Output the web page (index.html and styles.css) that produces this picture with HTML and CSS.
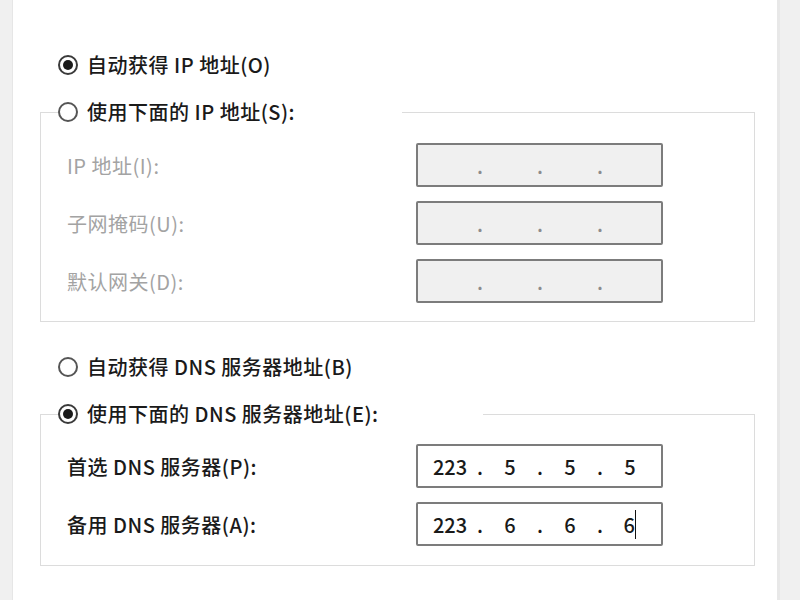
FILE: index.html
```html
<!DOCTYPE html>
<html lang="zh-CN">
<head>
<meta charset="utf-8">
<link rel="stylesheet" href="styles.css">
</head>
<body>
<div class="frame">
  <div class="side-left"></div>
  <div class="panel">
    <div class="option first">
      <span class="radio checked"><span class="dot"></span></span>
      <span class="opt-text">自动获得 IP 地址(O)</span>
    </div>
    <fieldset class="group group-ip">
      <legend class="legend legend-ip">
        <span class="radio"></span>
        <span class="opt-text">使用下面的 IP 地址(S):</span>
      </legend>
      <div class="rows">
        <span class="label disabled">IP 地址(I):</span>
        <div class="ipbox off">
          <span class="oct"></span><span class="sep">.</span><span class="oct"></span><span class="sep">.</span><span class="oct"></span><span class="sep">.</span><span class="oct"></span>
        </div>
        <span class="label disabled">子网掩码(U):</span>
        <div class="ipbox off">
          <span class="oct"></span><span class="sep">.</span><span class="oct"></span><span class="sep">.</span><span class="oct"></span><span class="sep">.</span><span class="oct"></span>
        </div>
        <span class="label disabled">默认网关(D):</span>
        <div class="ipbox off">
          <span class="oct"></span><span class="sep">.</span><span class="oct"></span><span class="sep">.</span><span class="oct"></span><span class="sep">.</span><span class="oct"></span>
        </div>
      </div>
    </fieldset>
    <div class="option third">
      <span class="radio"></span>
      <span class="opt-text">自动获得 DNS 服务器地址(B)</span>
    </div>
    <fieldset class="group group-dns">
      <legend class="legend legend-dns">
        <span class="radio checked"><span class="dot"></span></span>
        <span class="opt-text">使用下面的 DNS 服务器地址(E):</span>
      </legend>
      <div class="rows">
        <span class="label">首选 DNS 服务器(P):</span>
        <div class="ipbox">
          <span class="oct">223</span><span class="sep">.</span><span class="oct">5</span><span class="sep">.</span><span class="oct">5</span><span class="sep">.</span><span class="oct">5</span>
        </div>
        <span class="label">备用 DNS 服务器(A):</span>
        <div class="ipbox">
          <span class="oct">223</span><span class="sep">.</span><span class="oct">6</span><span class="sep">.</span><span class="oct">6</span><span class="sep">.</span><span class="oct"><span class="caret-wrap">6<span class="caret"></span></span></span>
        </div>
      </div>
    </fieldset>
  </div>
  <div class="side-right"></div>
</div>
</body>
</html>
```

FILE: styles.css
```css
html, body {
  margin: 0;
  padding: 0;
  background: #ffffff;
}

body {
  font-family: "Noto Sans CJK SC", "Noto Sans", "Liberation Sans", sans-serif;
  font-size: 20px;
  font-weight: 500;
  color: #1a1a1a;
}

.frame {
  display: flex;
  width: 800px;
  height: 600px;
  overflow: hidden;
}

.side-left {
  width: 12px;
  flex: none;
  background: #f0f0f0;
  border-right: 1px solid #e6e6e6;
}

.side-right {
  width: 20px;
  flex: none;
  background: #f0f0f0;
  border-left: 3px solid #e8e8e8;
}

.panel {
  flex: 1;
  display: flex;
  flex-direction: column;
  padding-top: 51px;
  background: #ffffff;
}

.option {
  display: flex;
  align-items: center;
  height: 28px;
  margin-left: 45px;
}

.radio {
  width: 20px;
  height: 20px;
  box-sizing: border-box;
  border: 2px solid #555555;
  border-radius: 50%;
  background: #ffffff;
  display: flex;
  align-items: center;
  justify-content: center;
  flex: none;
}

.radio.checked {
  border-color: #3a3a3a;
}

.radio .dot {
  width: 10px;
  height: 10px;
  border-radius: 50%;
  background: #1a1a1a;
}

.opt-text {
  margin-left: 9px;
  white-space: nowrap;
  letter-spacing: 0.5px;
  line-height: 28px;
}

.group {
  margin: 19px 22px 0 27px;
  padding: 17px 0 18px 0;
  border: 1px solid #dcdcdc;
  min-width: 0;
}

.group-dns {
  padding-top: 16px;
  padding-bottom: 19px;
}

.third {
  margin-top: 31px;
}

.legend {
  display: flex;
  align-items: center;
  height: 28px;
  padding: 0;
  margin-left: 17px;
  box-sizing: border-box;
}

.legend-ip {
  width: 344px;
}

.legend-dns {
  width: 425px;
}

.rows {
  display: grid;
  grid-template-columns: 349px 247px;
  row-gap: 14px;
  align-items: center;
  padding-left: 26px;
}

.label {
  white-space: nowrap;
  letter-spacing: 0.5px;
  color: #1a1a1a;
}

.label.disabled {
  color: #a3a3a3;
  font-weight: 400;
}

.ipbox {
  height: 44px;
  box-sizing: border-box;
  border: 2px solid #7c7c7c;
  border-radius: 2px;
  background: #ffffff;
  display: flex;
  align-items: center;
  padding-left: 9px;
  color: #1a1a1a;
}

.ipbox.off {
  background: #f0f0f0;
  color: #8c8c8c;
}

.oct {
  width: 46px;
  text-align: center;
  flex: none;
}

.sep {
  width: 14px;
  text-align: center;
  flex: none;
}

.caret-wrap {
  display: inline-flex;
  align-items: center;
}

.caret {
  display: inline-block;
  width: 1.5px;
  height: 29px;
  background: #111111;
}
```
